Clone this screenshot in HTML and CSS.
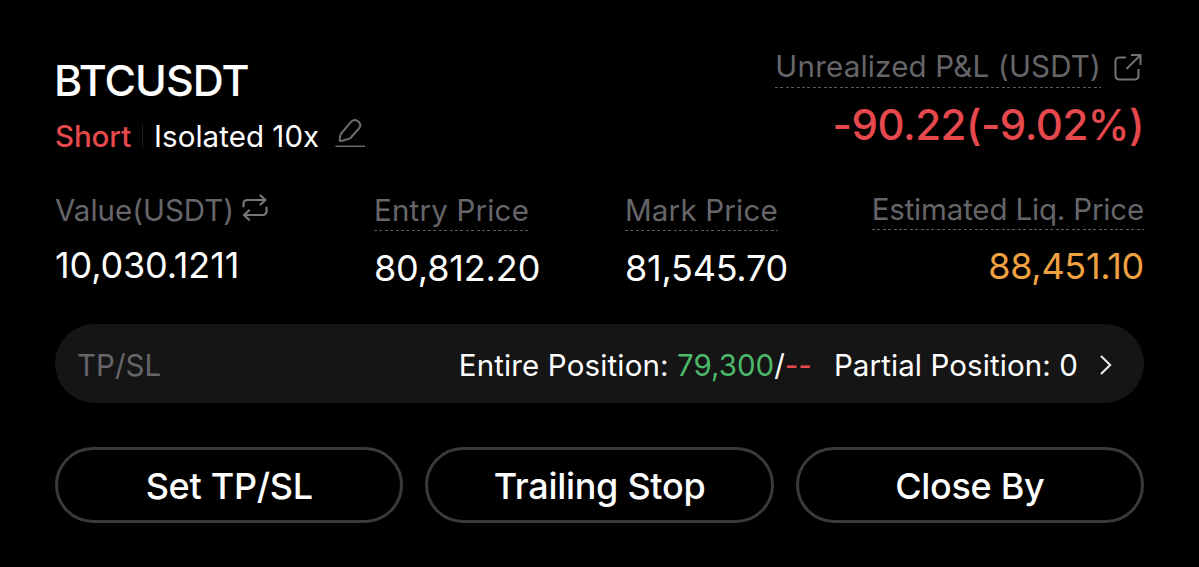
FILE: index.html
```
<!DOCTYPE html>
<html lang="en">
<head>
    <meta charset="UTF-8">
    <meta name="viewport" content="width=device-width, initial-scale=1.0">
    <title>BTCUSDT Position</title>
    <link rel="stylesheet" href="styles.css">
</head>
<body>
    <div class="position-card">
        <!-- Symbol and profit -->
        <div class="header">
            <div class="symbol-box">
                <h1 class="symbol">BTCUSDT</h1>
                <div class="mode">
                    <span class="side">Short</span>
                    <span class="divider"></span>
                    <span class="margin-mode">Isolated 10x</span>
                    <svg class="edit-icon" width="32" height="30" viewBox="0 0 32 30" fill="none" stroke="#6c6c6f" stroke-width="2" stroke-linejoin="round">
                        <path d="M6.200 15.500 15.700 4.200C17.500 2 20.500 1.600 23 3.300C25.600 5.100 26 7.700 24.300 10L16 19.500Q15 20.600 13.500 21L6.200 23Q4.500 23.300 4.700 21.500L5.300 17.500Q5.500 16.300 6.200 15.500Z"/>
                        <path d="M0.500 28.300H30" stroke-width="1.500"/>
                    </svg>
                </div>
            </div>
            <div class="pnl-box">
                <div class="pnl-title">
                    <span class="label dashed pnl-label">Unrealized P&amp;L (USDT)</span>
                    <svg class="share-icon" width="28" height="28" viewBox="0 0 28 28" fill="none" stroke="#727275" stroke-width="2">
                        <path d="M12 4.500H5.500Q1.500 4.500 1.500 8.500V22.500Q1.500 26.500 5.500 26.500H20.500Q24.500 26.500 24.500 22.500V16"/>
                        <path d="M17 2H26.500V12M26.500 2 12.500 16"/>
                    </svg>
                </div>
                <div class="pnl">-90.22(-9.02%)</div>
            </div>
        </div>

        <!-- Prices -->
        <div class="stats">
            <div class="stat">
                <div class="stat-title">
                    <span class="label value-label">Value(USDT)</span>
                    <svg class="swap-icon" width="26" height="28" viewBox="0 0 26 28" fill="none" stroke="#77777a" stroke-width="2.200" stroke-linecap="round" stroke-linejoin="round">
                        <path d="M1.500 12.500V10Q1.500 6 5.500 6H23.500L18.500 1.500M23.500 6 18.500 10.500"/>
                        <path d="M24.500 13.500V17Q24.500 21 20.500 21H2L7 16.500M2 21 7 25.700"/>
                    </svg>
                </div>
                <div class="value">10,030.1211</div>
            </div>
            <div class="stat stat-price">
                <span class="label dashed">Entry Price</span>
                <div class="value">80,812.20</div>
            </div>
            <div class="stat stat-price">
                <span class="label dashed">Mark Price</span>
                <div class="value mark">81,545.70</div>
            </div>
            <div class="stat stat-liq">
                <span class="label dashed">Estimated Liq. Price</span>
                <div class="value liq">88,451.10</div>
            </div>
        </div>

        <!-- TP/SL row -->
        <div class="tpsl">
            <span class="tpsl-label">TP/SL</span>
            <span class="entire"><span class="entire-label">Entire Position:</span> <span class="tp">79,300</span>/<span class="sl">--</span></span>
            <span class="partial">Partial Position: 0</span>
            <svg class="arrow-icon" width="14" height="22" viewBox="0 0 14 22" fill="none" stroke="#f0f0f0" stroke-width="2">
                <path d="M2 2 11.200 11 2 20"/>
            </svg>
        </div>

        <!-- Actions -->
        <div class="actions">
            <button class="btn">Set TP/SL</button>
            <button class="btn">Trailing Stop</button>
            <button class="btn">Close By</button>
        </div>
    </div>
</body>
</html>
```
FILE: styles.css
```
/* Global styles */
* {
    box-sizing: border-box;
}

body {
    font-family: Inter, sans-serif;
    margin: 0;
    background: #000;
    color: #fff;
}

.position-card {
    height: 567px;
    padding: 48px 55px 0;
}

/* Header */
.header {
    display: flex;
    justify-content: space-between;
    height: 144px;
}

.symbol-box {
    padding-top: 7px;
}

.symbol {
    margin: 0 0 0 -1px;
    font-size: 43px;
    line-height: 50px;
    font-weight: 500;
    letter-spacing: -1px;
}

.mode {
    display: flex;
    margin-top: 13px;
    font-size: 29.5px;
    line-height: 36px;
}

.side {
    color: #e5484d;
    font-weight: 500;
    letter-spacing: -0.1px;
}

.divider {
    width: 1px;
    height: 23px;
    margin: 6px 11px 0;
    background: #1e1e1e;
}

.margin-mode {
    letter-spacing: 0.05px;
}

.edit-icon {
    margin-left: 16px;
}

.pnl-box {
    text-align: right;
}

.pnl-title {
    display: flex;
    justify-content: flex-end;
}

.share-icon {
    margin: 5px 2px 0 13px;
}

.label {
    font-size: 29.5px;
    line-height: 36px;
    letter-spacing: 0.2px;
    color: #66666a;
    white-space: nowrap;
}

.value-label {
    letter-spacing: 0;
}

.dashed {
    display: inline-block;
    height: 39px;
    background: repeating-linear-gradient(90deg, #5a5a5a 0 3px, transparent 3px 5.4px) 0 100% / 100% 1px no-repeat;
}

.pnl-label {
    height: 40px;
}

.pnl {
    margin-top: 12px;
    font-size: 42px;
    line-height: 50px;
    font-weight: 500;
    letter-spacing: -0.5px;
    color: #e5484d;
}

/* Stats */
.stats {
    display: grid;
    grid-template-columns: 319px 251px 1fr auto;
    height: 132px;
}

.stat-title {
    display: flex;
    height: 39px;
}

.swap-icon {
    margin: 2px 0 0 8px;
}

.value {
    margin-top: 12px;
    font-size: 36px;
    line-height: 44px;
    letter-spacing: -0.15px;
}

.stat-price .value {
    margin-top: 15px;
}

.stat-price .mark {
    letter-spacing: -0.25px;
}

.stat-liq {
    margin-top: -1px;
    text-align: right;
}

.stat-liq .label {
    letter-spacing: -0.17px;
}

.liq {
    margin-top: 14px;
    letter-spacing: -0.3px;
    color: #f0a141;
}

/* TP/SL row */
.tpsl {
    display: flex;
    align-items: center;
    height: 79px;
    padding: 3px 31px 0 22px;
    border-radius: 40px;
    background: #151515;
    font-size: 29.5px;
    line-height: 36px;
}

.tpsl-label {
    color: #66666a;
    margin-right: auto;
}

.entire-label {
    letter-spacing: 0.15px;
}

.tp {
    color: #4cb86a;
}

.sl {
    color: #e5484d;
}

.partial {
    margin-left: 22px;
    letter-spacing: 0.1px;
}

.arrow-icon {
    margin-left: 21px;
}

/* Buttons */
.actions {
    display: grid;
    grid-template-columns: repeat(3, 1fr);
    gap: 22px;
    margin-top: 44px;
}

.btn {
    height: 76px;
    padding: 2px 0 0;
    border: 3px solid #3a3a3a;
    border-radius: 38px;
    background: transparent;
    color: #fff;
    font: 500 36px/44px Inter, sans-serif;
    letter-spacing: -0.3px;
}
```
